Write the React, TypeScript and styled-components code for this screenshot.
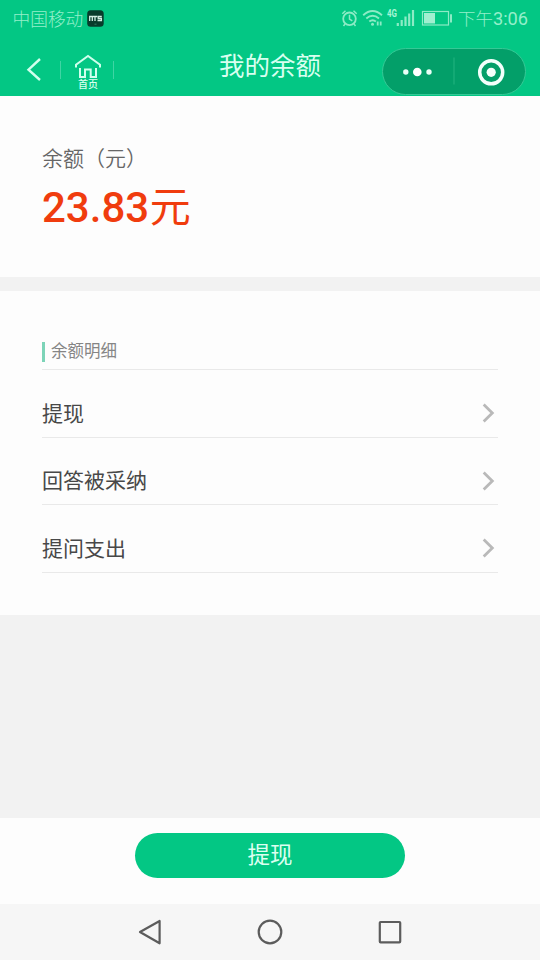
import React from 'react';
import styled, { createGlobalStyle } from 'styled-components';

const GlobalStyle = createGlobalStyle`
  * { box-sizing: border-box; }
  body {
    margin: 0;
    background: #f2f2f2;
    font-family: Roboto, "Noto Sans CJK SC", sans-serif;
  }
`;

const Screen = styled.div`
  width: 540px;
  height: 960px;
  display: flex;
  flex-direction: column;
  overflow: hidden;
  background: #f2f2f2;
`;

const Header = styled.header`
  height: 96px;
  background: #03c784;
  color: #d9fff0;
`;

const StatusBar = styled.div`
  height: 36px;
  display: flex;
  align-items: center;
  padding: 0 12px 0 12.5px;
  color: #93efca;
`;

const StatusText = styled.span`
  font-size: 17.7px;
  line-height: 36px;
  padding-top: 3px;
  font-weight: 300;
  white-space: nowrap;
`;

const Clock = styled(StatusText)`
  width: 70px;
  padding-top: 2px;
  font-size: 18.2px;
  font-weight: 400;
  display: flex;
  justify-content: flex-end;
`;

const ClockPeriod = styled.span`
  font-size: 17.5px;
  font-weight: 300;
`;

const CarrierBadge = styled.svg`
  margin-left: 3.7px;
`;

const StatusIcons = styled.svg`
  margin-left: auto;
  margin-right: 4px;
`;

const NavBar = styled.div`
  height: 60px;
  display: grid;
  grid-template-columns: 158px 1fr 158px;
`;

const NavLeft = styled.div`
  display: flex;
  padding-left: 24px;
`;

const BackIcon = styled.svg`
  margin-top: 20px;
`;

const Separator = styled.i<{ $gap: number }>`
  width: 1px;
  height: 18px;
  margin: 25px 0 0 ${(p) => p.$gap}px;
  background: #3fd5a4;
`;

const Home = styled.div`
  width: 30px;
  margin-left: 12px;
  padding-top: 18px;
  display: flex;
  flex-direction: column;
  align-items: center;
`;

const HomeLabel = styled.span`
  font-size: 10px;
  line-height: 12px;
  font-weight: 500;
  padding-top: 1px;
`;

const Title = styled.h1`
  margin: 0;
  font-size: 25.5px;
  line-height: 60px;
  font-weight: 400;
  text-align: center;
  white-space: nowrap;
`;

const Capsule = styled.div`
  width: 144px;
  height: 47px;
  margin-top: 12px;
  border: 1px solid #35c996;
  border-radius: 24px;
  background: #039f69;
  display: flex;
  align-items: center;
`;

const Card = styled.section<{ $height: number }>`
  height: ${(p) => p.$height}px;
  padding: 0 42px;
  background: #fdfdfd;
`;

const BalanceLabel = styled.div`
  padding-top: 48px;
  font-size: 21px;
  line-height: 30px;
  color: #666;
  font-weight: 350;
`;

const Amount = styled.div`
  display: flex;
  align-items: baseline;
  color: #f03c0e;
  font-size: 42px;
  line-height: 62px;
  font-weight: 500;
  margin-top: 3px;
`;

const Unit = styled.span`
  font-size: 41px;
  font-weight: 400;
  margin-left: 0.5px;
`;

const Gap = styled.div<{ $height: number }>`
  height: ${(p) => p.$height}px;
`;

const DetailHeading = styled.div`
  height: 79px;
  padding-top: 51px;
  border-bottom: 1px solid #e9e9e9;
  display: flex;
  align-items: flex-start;
  font-size: 16.5px;
  line-height: 20px;
  color: #858585;
`;

const Accent = styled.i`
  width: 3px;
  height: 20px;
  margin: 0 6px 0 0;
  background: #7dd4b8;
`;

const Row = styled.div`
  height: 67.5px;
  padding: 21px 1px 0 0;
  border-bottom: 1px solid #e9e9e9;
  display: flex;
  justify-content: space-between;
  align-items: center;
  font-size: 21px;
  line-height: 30px;
  color: #484848;
`;

const Chevron = styled.svg`
  margin-bottom: 1px;
`;

const Footer = styled.footer`
  height: 86px;
  margin-top: auto;
  padding-top: 14.5px;
  background: #fdfdfd;
  display: flex;
  justify-content: center;
  align-items: flex-start;
`;

const WithdrawButton = styled.button`
  width: 270px;
  height: 45px;
  padding: 0 0 1px;
  border: 0;
  border-radius: 23px;
  background: #03c784;
  color: #dcfff1;
  font: 400 22.5px/42px Roboto, "Noto Sans CJK SC", sans-serif;
`;

const SystemNav = styled.nav`
  height: 56px;
  padding: 0 135px;
  background: #f6f6f6;
  display: flex;
  justify-content: space-between;
  align-items: center;
`;

const details = ['提现', '回答被采纳', '提问支出'];

export default function App() {
  return (
    <>
      <GlobalStyle />
      <Screen>
        <Header>
          <StatusBar>
            <StatusText>中国移动</StatusText>
            <CarrierBadge width="17" height="17" viewBox="0 0 17 17">
              <rect x="0.2" y="0.2" width="16.5" height="16.5" rx="3.5" fill="#083c2b" />
              <path
                d="M2.7 11V6.5h5.3V11M5.3 6.5V11M8 6.5h2.2M14.8 6.5h-3.6v2h3.2v2H10.5"
                fill="none" stroke="#d3eee2" strokeWidth="1.3"
              />
              <path d="M7.5 14.2h2" stroke="#357b62" />
            </CarrierBadge>
            <StatusIcons width="114" height="36" viewBox="340 0 114 36" fill="none" stroke="#8cebc5">
              <circle cx="349.5" cy="18.8" r="6.3" strokeWidth="1.8" />
              <path d="M349.5 14.8v4.3l2.8 1.8M342.3 13.7l3.2-3M356.7 13.7l-3.2-3M345 24l-1.5 2M354 24l1.5 2" strokeWidth="1.5" />
              <path d="M363.2 15.2q9.3-8.3 18.8 0M366.3 18.5q6.3-5.4 12.7 0M369.3 21.6q3.3-2.7 6.6 0" strokeWidth="1.9" />
              <circle cx="372.5" cy="24.2" r="1.5" fill="#8cebc5" stroke="none" />
              <path d="M377.7 21.5v4M380.7 21.5v4" strokeWidth="1.8" />
              <text x="387" y="17.3" fontSize="10" fontWeight="700" textLength="10" lengthAdjust="spacingAndGlyphs" fill="#a6f5d6" stroke="none">4G</text>
              <path d="M397.8 26v-3M401.7 26v-6M405.5 26v-9.5M409.2 26v-12.5M413 26v-16" strokeWidth="2.2" />
              <rect x="422.5" y="11.5" width="26" height="13.5" strokeWidth="1.2" />
              <rect x="424" y="13" width="11" height="10.5" fill="#a0efd0" stroke="none" />
              <path d="M451 14.2v8.2" strokeWidth="2" />
            </StatusIcons>
            <Clock><ClockPeriod>下午</ClockPeriod>3:06</Clock>
          </StatusBar>
          <NavBar>
            <NavLeft>
              <BackIcon width="20" height="28" viewBox="0 0 20 28">
                <path d="M16 3L4.5 13.7 16 24" fill="none" stroke="#d0ffed" strokeWidth="2.4" />
              </BackIcon>
              <Separator $gap={16} />
              <Home>
                <svg width="30" height="24" viewBox="0 0 30 24" fill="none" stroke="#d0ffed" strokeWidth="2">
                  <path d="M3 13.5V10.7L15 2l12 8.7v2.8" />
                  <path d="M7 14V23h5v-7.5h5.7V23H23v-9" />
                </svg>
                <HomeLabel>首页</HomeLabel>
              </Home>
              <Separator $gap={10} />
            </NavLeft>
            <Title>我的余额</Title>
            <Capsule>
              <svg width="142" height="45" viewBox="383 49 142 45">
                <circle cx="405.8" cy="72" r="2.7" fill="#e9fff7" />
                <circle cx="417.3" cy="72" r="4.3" fill="#fff" />
                <circle cx="429" cy="72" r="2.7" fill="#e9fff7" />
                <path d="M454 57.5v27" stroke="#25b481" />
                <circle cx="491.2" cy="72.3" r="11.5" fill="none" stroke="#f3fffb" strokeWidth="3.5" />
                <circle cx="491.2" cy="72.3" r="4.6" fill="#f3fffb" />
              </svg>
            </Capsule>
          </NavBar>
        </Header>
        <Card $height={181}>
          <BalanceLabel>余额（元）</BalanceLabel>
          <Amount>23.83<Unit>元</Unit></Amount>
        </Card>
        <Gap $height={14} />
        <Card $height={324}>
          <DetailHeading><Accent />余额明细</DetailHeading>
          {details.map((label) => (
            <Row key={label}>
              {label}
              <Chevron width="16" height="24" viewBox="0 0 16 24">
                <path d="M2.7 3.6l8.6 8.4-8.6 8.4" fill="none" stroke="#b9b9b9" strokeWidth="2.8" />
              </Chevron>
            </Row>
          ))}
        </Card>
        <Footer>
          <WithdrawButton>提现</WithdrawButton>
        </Footer>
        <SystemNav>
          <svg width="30" height="30" viewBox="0 0 30 30" fill="none" stroke="#5c5c5c" strokeWidth="2.2" strokeLinejoin="round">
            <path d="M24.6 4v22.3L5 15z" />
          </svg>
          <svg width="30" height="30" viewBox="0 0 30 30" fill="none" stroke="#5c5c5c" strokeWidth="2.2">
            <circle cx="15" cy="15" r="11.3" />
          </svg>
          <svg width="30" height="30" viewBox="0 0 30 30" fill="none" stroke="#5c5c5c" strokeWidth="2.2">
            <rect x="4.8" y="5" width="20.4" height="20.4" rx="0.8" />
          </svg>
        </SystemNav>
      </Screen>
    </>
  );
}
